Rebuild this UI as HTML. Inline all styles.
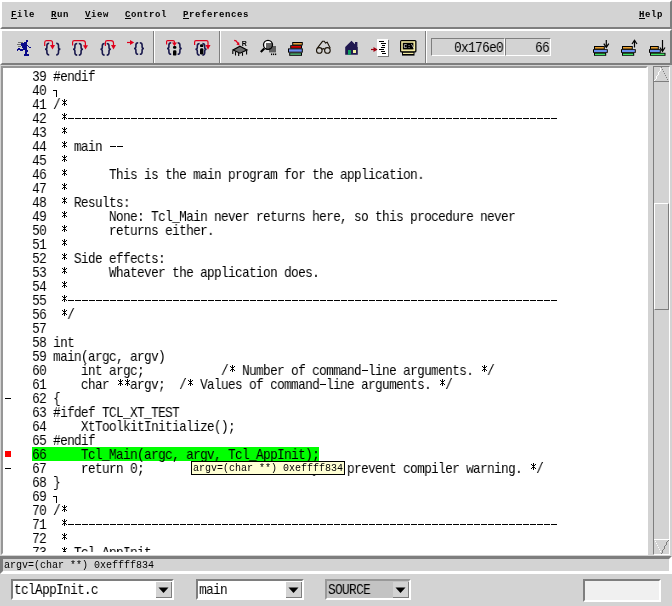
<!DOCTYPE html>
<html><head><meta charset="utf-8"><style>
html,body{margin:0;padding:0;}
body{width:672px;height:606px;position:relative;overflow:hidden;background:#d3d3d3;}
.a{position:absolute;box-sizing:content-box;}
.mnu{font-family:"Liberation Mono",monospace;font-size:10px;line-height:10px;font-weight:bold;white-space:pre;color:#000;will-change:transform;}
.mm{font-size:9px;letter-spacing:0.6px;}
.code{font-family:"Liberation Mono",monospace;font-size:15px;line-height:14px;white-space:pre;color:#000;transform:scaleX(0.85);letter-spacing:-0.7647px;transform-origin:0 0;will-change:transform;}
</style></head><body>
<div class="a" style="left:0px;top:0px;width:668px;height:25px;border:2px solid;border-color:#ffffff #7e7e7e #7e7e7e #ffffff;"></div><div class="a mnu mm" style="left:11px;top:10px">File</div><div class="a" style="left:11px;top:18px;width:6px;height:1px;background:#000"></div><div class="a mnu mm" style="left:51px;top:10px">Run</div><div class="a" style="left:51px;top:18px;width:6px;height:1px;background:#000"></div><div class="a mnu mm" style="left:85px;top:10px">View</div><div class="a" style="left:85px;top:18px;width:6px;height:1px;background:#000"></div><div class="a mnu mm" style="left:125px;top:10px">Control</div><div class="a" style="left:125px;top:18px;width:6px;height:1px;background:#000"></div><div class="a mnu mm" style="left:183px;top:10px">Preferences</div><div class="a" style="left:183px;top:18px;width:6px;height:1px;background:#000"></div><div class="a mnu mm" style="left:639px;top:10px">Help</div><div class="a" style="left:639px;top:18px;width:6px;height:1px;background:#000"></div><div class="a" style="left:0px;top:29px;width:668px;height:32px;border:2px solid;border-color:#ffffff #7e7e7e #7e7e7e #ffffff;"></div><div class="a" style="left:153px;top:31px;width:1px;height:32px;background:#7e7e7e"></div><div class="a" style="left:154px;top:31px;width:1px;height:32px;background:#ffffff"></div><div class="a" style="left:219px;top:31px;width:1px;height:32px;background:#7e7e7e"></div><div class="a" style="left:220px;top:31px;width:1px;height:32px;background:#ffffff"></div><div class="a" style="left:425px;top:31px;width:1px;height:32px;background:#7e7e7e"></div><div class="a" style="left:426px;top:31px;width:1px;height:32px;background:#ffffff"></div><div class="a" style="left:431px;top:38px;width:72px;height:16px;border:1px solid;border-color:#7e7e7e #ffffff #ffffff #7e7e7e;"></div><div class="a" style="left:505px;top:38px;width:44px;height:16px;border:1px solid;border-color:#7e7e7e #ffffff #ffffff #7e7e7e;"></div><div class="a code" style="left:454px;top:42px">0x176e0</div><div class="a code" style="left:535px;top:42px">66</div><div class="a" style="left:1px;top:66px;width:643px;height:485px;border:2px solid;border-color:#7e7e7e #ffffff #ffffff #7e7e7e;background:#fff;border-color:#969696 #fff #fff #969696;"></div><div class="a" style="left:3px;top:68px;width:645px;height:484px;overflow:hidden"><div class="a" style="left:-3px;top:-68px;width:672px;height:606px"><div class="a" style="left:32px;top:447px;width:287px;height:14px;background:#00ff00"></div><div class="a" style="left:5px;top:451px;width:6px;height:6px;background:#ff0000"></div><div class="a code" style="left:4px;top:71px">    39 #endif</div><div class="a" style="left:53px;top:90px;width:3px;height:6px;border-top:1px solid #000;border-right:1px solid #000"></div><div class="a code" style="left:4px;top:85px">    40 </div><div class="a code" style="left:4px;top:99px">    41 / </div><div class="a code" style="left:4px;top:113px">    42                                                                         </div><div class="a code" style="left:4px;top:127px">    43   </div><div class="a code" style="left:4px;top:141px">    44    main   </div><div class="a code" style="left:4px;top:155px">    45   </div><div class="a code" style="left:4px;top:169px">    46         This is the main program for the application.</div><div class="a code" style="left:4px;top:183px">    47   </div><div class="a code" style="left:4px;top:197px">    48    Results:</div><div class="a code" style="left:4px;top:211px">    49         None: Tcl_Main never returns here, so this procedure never</div><div class="a code" style="left:4px;top:225px">    50         returns either.</div><div class="a code" style="left:4px;top:239px">    51   </div><div class="a code" style="left:4px;top:253px">    52    Side effects:</div><div class="a code" style="left:4px;top:267px">    53         Whatever the application does.</div><div class="a code" style="left:4px;top:281px">    54   </div><div class="a code" style="left:4px;top:295px">    55                                                                         </div><div class="a code" style="left:4px;top:309px">    56   /</div><div class="a code" style="left:4px;top:323px">    57 </div><div class="a code" style="left:4px;top:337px">    58 int</div><div class="a code" style="left:4px;top:351px">    59 main(argc, argv)</div><div class="a code" style="left:4px;top:365px">    60     int argc;           /  Number of command line arguments.  /</div><div class="a code" style="left:4px;top:379px">    61     char   argv;  /  Values of command line arguments.  /</div><div class="a code" style="left:4px;top:393px">    62 {</div><div class="a code" style="left:4px;top:407px">    63 #ifdef TCL_XT_TEST</div><div class="a code" style="left:4px;top:421px">    64     XtToolkitInitialize();</div><div class="a code" style="left:4px;top:435px">    65 #endif</div><div class="a code" style="left:4px;top:449px">    66     Tcl_Main(argc, argv, Tcl_AppInit);</div><div class="a code" style="left:4px;top:463px">    67     return 0;           /  Needed only to prevent compiler warning.  /</div><div class="a code" style="left:4px;top:477px">    68 }</div><div class="a" style="left:53px;top:496px;width:3px;height:6px;border-top:1px solid #000;border-right:1px solid #000"></div><div class="a code" style="left:4px;top:491px">    69 </div><div class="a code" style="left:4px;top:505px">    70 / </div><div class="a code" style="left:4px;top:519px">    71                                                                         </div><div class="a code" style="left:4px;top:533px">    72   </div><div class="a code" style="left:4px;top:547px">    73    Tcl_AppInit   </div><svg class="a" style="left:0;top:0" width="672" height="606" shape-rendering="crispEdges"><defs><symbol id="ast" width="7" height="14"><rect x="4" y="2" width="1" height="7"/><rect x="3" y="4" width="3" height="1"/><rect x="3" y="6" width="3" height="1"/><rect x="2" y="3" width="1" height="1"/><rect x="6" y="3" width="1" height="1"/><rect x="2" y="7" width="1" height="1"/><rect x="6" y="7" width="1" height="1"/></symbol></defs><g fill="#000"><use href="#ast" x="60" y="97"/><use href="#ast" x="60" y="111"/><rect x="68" y="118" width="6" height="1"/><rect x="75" y="118" width="6" height="1"/><rect x="82" y="118" width="6" height="1"/><rect x="89" y="118" width="6" height="1"/><rect x="96" y="118" width="6" height="1"/><rect x="103" y="118" width="6" height="1"/><rect x="110" y="118" width="6" height="1"/><rect x="117" y="118" width="6" height="1"/><rect x="124" y="118" width="6" height="1"/><rect x="131" y="118" width="6" height="1"/><rect x="138" y="118" width="6" height="1"/><rect x="145" y="118" width="6" height="1"/><rect x="152" y="118" width="6" height="1"/><rect x="159" y="118" width="6" height="1"/><rect x="166" y="118" width="6" height="1"/><rect x="173" y="118" width="6" height="1"/><rect x="180" y="118" width="6" height="1"/><rect x="187" y="118" width="6" height="1"/><rect x="194" y="118" width="6" height="1"/><rect x="201" y="118" width="6" height="1"/><rect x="208" y="118" width="6" height="1"/><rect x="215" y="118" width="6" height="1"/><rect x="222" y="118" width="6" height="1"/><rect x="229" y="118" width="6" height="1"/><rect x="236" y="118" width="6" height="1"/><rect x="243" y="118" width="6" height="1"/><rect x="250" y="118" width="6" height="1"/><rect x="257" y="118" width="6" height="1"/><rect x="264" y="118" width="6" height="1"/><rect x="271" y="118" width="6" height="1"/><rect x="278" y="118" width="6" height="1"/><rect x="285" y="118" width="6" height="1"/><rect x="292" y="118" width="6" height="1"/><rect x="299" y="118" width="6" height="1"/><rect x="306" y="118" width="6" height="1"/><rect x="313" y="118" width="6" height="1"/><rect x="320" y="118" width="6" height="1"/><rect x="327" y="118" width="6" height="1"/><rect x="334" y="118" width="6" height="1"/><rect x="341" y="118" width="6" height="1"/><rect x="348" y="118" width="6" height="1"/><rect x="355" y="118" width="6" height="1"/><rect x="362" y="118" width="6" height="1"/><rect x="369" y="118" width="6" height="1"/><rect x="376" y="118" width="6" height="1"/><rect x="383" y="118" width="6" height="1"/><rect x="390" y="118" width="6" height="1"/><rect x="397" y="118" width="6" height="1"/><rect x="404" y="118" width="6" height="1"/><rect x="411" y="118" width="6" height="1"/><rect x="418" y="118" width="6" height="1"/><rect x="425" y="118" width="6" height="1"/><rect x="432" y="118" width="6" height="1"/><rect x="439" y="118" width="6" height="1"/><rect x="446" y="118" width="6" height="1"/><rect x="453" y="118" width="6" height="1"/><rect x="460" y="118" width="6" height="1"/><rect x="467" y="118" width="6" height="1"/><rect x="474" y="118" width="6" height="1"/><rect x="481" y="118" width="6" height="1"/><rect x="488" y="118" width="6" height="1"/><rect x="495" y="118" width="6" height="1"/><rect x="502" y="118" width="6" height="1"/><rect x="509" y="118" width="6" height="1"/><rect x="516" y="118" width="6" height="1"/><rect x="523" y="118" width="6" height="1"/><rect x="530" y="118" width="6" height="1"/><rect x="537" y="118" width="6" height="1"/><rect x="544" y="118" width="6" height="1"/><rect x="551" y="118" width="6" height="1"/><use href="#ast" x="60" y="125"/><use href="#ast" x="60" y="139"/><rect x="110" y="146" width="6" height="1"/><rect x="117" y="146" width="6" height="1"/><use href="#ast" x="60" y="153"/><use href="#ast" x="60" y="167"/><use href="#ast" x="60" y="181"/><use href="#ast" x="60" y="195"/><use href="#ast" x="60" y="209"/><use href="#ast" x="60" y="223"/><use href="#ast" x="60" y="237"/><use href="#ast" x="60" y="251"/><use href="#ast" x="60" y="265"/><use href="#ast" x="60" y="279"/><use href="#ast" x="60" y="293"/><rect x="68" y="300" width="6" height="1"/><rect x="75" y="300" width="6" height="1"/><rect x="82" y="300" width="6" height="1"/><rect x="89" y="300" width="6" height="1"/><rect x="96" y="300" width="6" height="1"/><rect x="103" y="300" width="6" height="1"/><rect x="110" y="300" width="6" height="1"/><rect x="117" y="300" width="6" height="1"/><rect x="124" y="300" width="6" height="1"/><rect x="131" y="300" width="6" height="1"/><rect x="138" y="300" width="6" height="1"/><rect x="145" y="300" width="6" height="1"/><rect x="152" y="300" width="6" height="1"/><rect x="159" y="300" width="6" height="1"/><rect x="166" y="300" width="6" height="1"/><rect x="173" y="300" width="6" height="1"/><rect x="180" y="300" width="6" height="1"/><rect x="187" y="300" width="6" height="1"/><rect x="194" y="300" width="6" height="1"/><rect x="201" y="300" width="6" height="1"/><rect x="208" y="300" width="6" height="1"/><rect x="215" y="300" width="6" height="1"/><rect x="222" y="300" width="6" height="1"/><rect x="229" y="300" width="6" height="1"/><rect x="236" y="300" width="6" height="1"/><rect x="243" y="300" width="6" height="1"/><rect x="250" y="300" width="6" height="1"/><rect x="257" y="300" width="6" height="1"/><rect x="264" y="300" width="6" height="1"/><rect x="271" y="300" width="6" height="1"/><rect x="278" y="300" width="6" height="1"/><rect x="285" y="300" width="6" height="1"/><rect x="292" y="300" width="6" height="1"/><rect x="299" y="300" width="6" height="1"/><rect x="306" y="300" width="6" height="1"/><rect x="313" y="300" width="6" height="1"/><rect x="320" y="300" width="6" height="1"/><rect x="327" y="300" width="6" height="1"/><rect x="334" y="300" width="6" height="1"/><rect x="341" y="300" width="6" height="1"/><rect x="348" y="300" width="6" height="1"/><rect x="355" y="300" width="6" height="1"/><rect x="362" y="300" width="6" height="1"/><rect x="369" y="300" width="6" height="1"/><rect x="376" y="300" width="6" height="1"/><rect x="383" y="300" width="6" height="1"/><rect x="390" y="300" width="6" height="1"/><rect x="397" y="300" width="6" height="1"/><rect x="404" y="300" width="6" height="1"/><rect x="411" y="300" width="6" height="1"/><rect x="418" y="300" width="6" height="1"/><rect x="425" y="300" width="6" height="1"/><rect x="432" y="300" width="6" height="1"/><rect x="439" y="300" width="6" height="1"/><rect x="446" y="300" width="6" height="1"/><rect x="453" y="300" width="6" height="1"/><rect x="460" y="300" width="6" height="1"/><rect x="467" y="300" width="6" height="1"/><rect x="474" y="300" width="6" height="1"/><rect x="481" y="300" width="6" height="1"/><rect x="488" y="300" width="6" height="1"/><rect x="495" y="300" width="6" height="1"/><rect x="502" y="300" width="6" height="1"/><rect x="509" y="300" width="6" height="1"/><rect x="516" y="300" width="6" height="1"/><rect x="523" y="300" width="6" height="1"/><rect x="530" y="300" width="6" height="1"/><rect x="537" y="300" width="6" height="1"/><rect x="544" y="300" width="6" height="1"/><rect x="551" y="300" width="6" height="1"/><use href="#ast" x="60" y="307"/><use href="#ast" x="228" y="363"/><rect x="362" y="370" width="6" height="1"/><use href="#ast" x="480" y="363"/><use href="#ast" x="116" y="377"/><use href="#ast" x="123" y="377"/><use href="#ast" x="186" y="377"/><rect x="320" y="384" width="6" height="1"/><use href="#ast" x="438" y="377"/><rect x="5" y="398" width="6" height="1"/><rect x="5" y="468" width="6" height="1"/><use href="#ast" x="228" y="461"/><use href="#ast" x="529" y="461"/><use href="#ast" x="60" y="503"/><use href="#ast" x="60" y="517"/><rect x="68" y="524" width="6" height="1"/><rect x="75" y="524" width="6" height="1"/><rect x="82" y="524" width="6" height="1"/><rect x="89" y="524" width="6" height="1"/><rect x="96" y="524" width="6" height="1"/><rect x="103" y="524" width="6" height="1"/><rect x="110" y="524" width="6" height="1"/><rect x="117" y="524" width="6" height="1"/><rect x="124" y="524" width="6" height="1"/><rect x="131" y="524" width="6" height="1"/><rect x="138" y="524" width="6" height="1"/><rect x="145" y="524" width="6" height="1"/><rect x="152" y="524" width="6" height="1"/><rect x="159" y="524" width="6" height="1"/><rect x="166" y="524" width="6" height="1"/><rect x="173" y="524" width="6" height="1"/><rect x="180" y="524" width="6" height="1"/><rect x="187" y="524" width="6" height="1"/><rect x="194" y="524" width="6" height="1"/><rect x="201" y="524" width="6" height="1"/><rect x="208" y="524" width="6" height="1"/><rect x="215" y="524" width="6" height="1"/><rect x="222" y="524" width="6" height="1"/><rect x="229" y="524" width="6" height="1"/><rect x="236" y="524" width="6" height="1"/><rect x="243" y="524" width="6" height="1"/><rect x="250" y="524" width="6" height="1"/><rect x="257" y="524" width="6" height="1"/><rect x="264" y="524" width="6" height="1"/><rect x="271" y="524" width="6" height="1"/><rect x="278" y="524" width="6" height="1"/><rect x="285" y="524" width="6" height="1"/><rect x="292" y="524" width="6" height="1"/><rect x="299" y="524" width="6" height="1"/><rect x="306" y="524" width="6" height="1"/><rect x="313" y="524" width="6" height="1"/><rect x="320" y="524" width="6" height="1"/><rect x="327" y="524" width="6" height="1"/><rect x="334" y="524" width="6" height="1"/><rect x="341" y="524" width="6" height="1"/><rect x="348" y="524" width="6" height="1"/><rect x="355" y="524" width="6" height="1"/><rect x="362" y="524" width="6" height="1"/><rect x="369" y="524" width="6" height="1"/><rect x="376" y="524" width="6" height="1"/><rect x="383" y="524" width="6" height="1"/><rect x="390" y="524" width="6" height="1"/><rect x="397" y="524" width="6" height="1"/><rect x="404" y="524" width="6" height="1"/><rect x="411" y="524" width="6" height="1"/><rect x="418" y="524" width="6" height="1"/><rect x="425" y="524" width="6" height="1"/><rect x="432" y="524" width="6" height="1"/><rect x="439" y="524" width="6" height="1"/><rect x="446" y="524" width="6" height="1"/><rect x="453" y="524" width="6" height="1"/><rect x="460" y="524" width="6" height="1"/><rect x="467" y="524" width="6" height="1"/><rect x="474" y="524" width="6" height="1"/><rect x="481" y="524" width="6" height="1"/><rect x="488" y="524" width="6" height="1"/><rect x="495" y="524" width="6" height="1"/><rect x="502" y="524" width="6" height="1"/><rect x="509" y="524" width="6" height="1"/><rect x="516" y="524" width="6" height="1"/><rect x="523" y="524" width="6" height="1"/><rect x="530" y="524" width="6" height="1"/><rect x="537" y="524" width="6" height="1"/><rect x="544" y="524" width="6" height="1"/><rect x="551" y="524" width="6" height="1"/><use href="#ast" x="60" y="531"/><use href="#ast" x="60" y="545"/><rect x="159" y="552" width="6" height="1"/><rect x="166" y="552" width="6" height="1"/></g></svg></div></div><div class="a" style="left:653px;top:66px;width:15px;height:487px;border:1px solid;border-color:#7e7e7e #ffffff #ffffff #7e7e7e;"></div><svg class="a" style="left:654px;top:67px" width="15" height="15" shape-rendering="crispEdges"><rect x="7" y="0" width="1" height="1" fill="#fff"/><rect x="7" y="0" width="1" height="1" fill="#7e7e7e"/><rect x="6" y="1" width="1" height="1" fill="#fff"/><rect x="6" y="2" width="1" height="1" fill="#fff"/><rect x="8" y="2" width="1" height="1" fill="#7e7e7e"/><rect x="6" y="3" width="1" height="1" fill="#fff"/><rect x="5" y="4" width="1" height="1" fill="#fff"/><rect x="9" y="4" width="1" height="1" fill="#7e7e7e"/><rect x="4" y="5" width="1" height="1" fill="#fff"/><rect x="4" y="6" width="1" height="1" fill="#fff"/><rect x="10" y="6" width="1" height="1" fill="#7e7e7e"/><rect x="4" y="7" width="1" height="1" fill="#fff"/><rect x="3" y="8" width="1" height="1" fill="#fff"/><rect x="11" y="8" width="1" height="1" fill="#7e7e7e"/><rect x="2" y="9" width="1" height="1" fill="#fff"/><rect x="2" y="10" width="1" height="1" fill="#fff"/><rect x="12" y="10" width="1" height="1" fill="#7e7e7e"/><rect x="2" y="11" width="1" height="1" fill="#fff"/><rect x="1" y="12" width="1" height="1" fill="#fff"/><rect x="13" y="12" width="1" height="1" fill="#7e7e7e"/><rect x="0" y="13" width="1" height="1" fill="#fff"/><rect x="0" y="14" width="1" height="1" fill="#fff"/><rect x="14" y="14" width="1" height="1" fill="#7e7e7e"/><rect x="0" y="14" width="15" height="1" fill="#7e7e7e"/></svg><svg class="a" style="left:654px;top:539px" width="15" height="15" shape-rendering="crispEdges"><rect x="0" y="0" width="1" height="1" fill="#fff"/><rect x="14" y="0" width="1" height="1" fill="#7e7e7e"/><rect x="14" y="1" width="1" height="1" fill="#7e7e7e"/><rect x="1" y="2" width="1" height="1" fill="#fff"/><rect x="13" y="2" width="1" height="1" fill="#7e7e7e"/><rect x="12" y="3" width="1" height="1" fill="#7e7e7e"/><rect x="2" y="4" width="1" height="1" fill="#fff"/><rect x="12" y="4" width="1" height="1" fill="#7e7e7e"/><rect x="12" y="5" width="1" height="1" fill="#7e7e7e"/><rect x="3" y="6" width="1" height="1" fill="#fff"/><rect x="11" y="6" width="1" height="1" fill="#7e7e7e"/><rect x="10" y="7" width="1" height="1" fill="#7e7e7e"/><rect x="4" y="8" width="1" height="1" fill="#fff"/><rect x="10" y="8" width="1" height="1" fill="#7e7e7e"/><rect x="10" y="9" width="1" height="1" fill="#7e7e7e"/><rect x="5" y="10" width="1" height="1" fill="#fff"/><rect x="9" y="10" width="1" height="1" fill="#7e7e7e"/><rect x="8" y="11" width="1" height="1" fill="#7e7e7e"/><rect x="6" y="12" width="1" height="1" fill="#fff"/><rect x="8" y="12" width="1" height="1" fill="#7e7e7e"/><rect x="8" y="13" width="1" height="1" fill="#7e7e7e"/><rect x="7" y="14" width="1" height="1" fill="#fff"/><rect x="7" y="14" width="1" height="1" fill="#7e7e7e"/><rect x="0" y="0" width="15" height="1" fill="#fff"/></svg><div class="a" style="left:654px;top:203px;width:13px;height:105px;border:1px solid;border-color:#ffffff #7e7e7e #7e7e7e #ffffff;"></div><div class="a" style="left:0px;top:556px;width:666px;height:12px;border:3px solid;border-color:#7e7e7e #ffffff #ffffff #7e7e7e;"></div><div class="a mnu" style="left:4px;top:561px;font-weight:normal">argv=(char **) 0xeffff834</div><div class="a" style="left:191px;top:461px;width:152px;height:12px;border:1px solid #000;background:#ffffd4"></div><div class="a mnu" style="left:193px;top:464px;font-weight:normal">argv=(char **) 0xeffff834</div><div class="a" style="left:11px;top:579px;width:159px;height:17px;border:2px solid;border-color:#7e7e7e #fff #fff #7e7e7e;background:#fff"></div><div class="a code" style="left:14px;top:584px">tclAppInit.c</div><div class="a" style="left:156px;top:582px;width:15px;height:15px;border:1px solid;border-color:#fff #7e7e7e #7e7e7e #fff;border-width:0 1px 1px 0;background:#d3d3d3"></div><svg class="a" style="left:158px;top:587px" width="11" height="7"><polygon points="0.5,0.5 10.5,0.5 5.5,6" fill="#000"/></svg><div class="a" style="left:196px;top:579px;width:104px;height:17px;border:2px solid;border-color:#7e7e7e #fff #fff #7e7e7e;background:#fff"></div><div class="a code" style="left:199px;top:584px">main</div><div class="a" style="left:286px;top:582px;width:15px;height:15px;border:1px solid;border-color:#fff #7e7e7e #7e7e7e #fff;border-width:0 1px 1px 0;background:#d3d3d3"></div><svg class="a" style="left:288px;top:587px" width="11" height="7"><polygon points="0.5,0.5 10.5,0.5 5.5,6" fill="#000"/></svg><div class="a" style="left:325px;top:579px;width:82px;height:17px;border:2px solid;border-color:#999 #fff #fff #999;background:#c3c3c3"></div><div class="a code" style="left:328px;top:584px">SOURCE</div><div class="a" style="left:393px;top:582px;width:15px;height:15px;border:1px solid;border-color:#fff #7e7e7e #7e7e7e #fff;border-width:0 1px 1px 0;background:#d3d3d3"></div><svg class="a" style="left:395px;top:587px" width="11" height="7"><polygon points="0.5,0.5 10.5,0.5 5.5,6" fill="#000"/></svg><div class="a" style="left:583px;top:579px;width:74px;height:19px;border:2px solid;border-color:#7e7e7e #ffffff #ffffff #7e7e7e;background:#f0f0f0;"></div><svg class="a" style="left:0;top:29px" width="672" height="36" viewBox="0 29 672 36">
<defs>
<path id="lb" d="M4.6,0.7 Q2.3,0.7 2.3,3 V4.8 Q2.3,6.5 0.4,6.5 Q2.3,6.5 2.3,8.2 V10 Q2.3,12.3 4.6,12.3" fill="none" stroke="#1a1a4e" stroke-width="1.6"/>
<path id="rb" d="M0.4,0.7 Q2.7,0.7 2.7,3 V4.8 Q2.7,6.5 4.6,6.5 Q2.7,6.5 2.7,8.2 V10 Q2.7,12.3 0.4,12.3" fill="none" stroke="#1a1a4e" stroke-width="1.6"/>
</defs>
<!-- runner -->
<g fill="#0a0a8a" shape-rendering="crispEdges"><rect x="26" y="40" width="2" height="2"/><rect x="24" y="42" width="3" height="1"/><rect x="21" y="43" width="6" height="3"/><rect x="27" y="45" width="1" height="1"/><rect x="22" y="46" width="5" height="1"/><rect x="28" y="46" width="1" height="1"/><rect x="22" y="47" width="5" height="1"/><rect x="29" y="47" width="2" height="1"/><rect x="23" y="48" width="4" height="1"/><rect x="18" y="48" width="2" height="1"/><rect x="17" y="49" width="10" height="1"/><rect x="17" y="50" width="1" height="1"/><rect x="20" y="50" width="3" height="1"/><rect x="25" y="50" width="3" height="1"/><rect x="25" y="51" width="3" height="1"/><rect x="25" y="52" width="2" height="2"/><rect x="24" y="54" width="5" height="2"/></g>
<g fill="#707070" shape-rendering="crispEdges"><rect x="18" y="42" width="5" height="1"/><rect x="17" y="44" width="4" height="1"/><rect x="18" y="46" width="3" height="1"/></g>
<!-- step -->
<use href="#lb" x="44.6" y="42.6"/><use href="#rb" x="55.8" y="42.6"/>
<path d="M44.7,46 V42.5 Q44.7,40.6 46.5,40.6 H50.5 Q52.5,40.6 52.5,42.5 V47" fill="none" stroke="#e0001c" stroke-width="1.2"/>
<path d="M50,45 H55 L52.5,49.6 Z" fill="#e0001c"/>
<!-- next -->
<use href="#lb" x="72.6" y="42.8"/><use href="#rb" x="78.4" y="42.8"/>
<path d="M72.6,45.5 V42.3 Q72.6,40.6 74.4,40.6 H83 Q85.4,40.6 85.4,43 V47" fill="none" stroke="#e0001c" stroke-width="1.2"/>
<path d="M83,45.2 H88 L85.5,49.6 Z" fill="#e0001c"/>
<!-- finish -->
<use href="#lb" x="100" y="42.8"/><use href="#rb" x="106.3" y="42.8"/>
<path d="M105.4,46 V42.4 Q105.4,40.6 107.2,40.6 H111 Q113.5,40.6 113.5,43 V47" fill="none" stroke="#e0001c" stroke-width="1.2"/>
<path d="M111,45.1 H116 L113.5,49.6 Z" fill="#e0001c"/>
<!-- continue -->
<use href="#lb" x="133.6" y="42"/><use href="#rb" x="139.4" y="42"/>
<path d="M127,42.5 H131" stroke="#e0001c" stroke-width="1.2"/>
<path d="M130,40 L134.2,42.5 L130,45 Z" fill="#e0001c"/>
<!-- stepi -->
<use href="#lb" x="166.6" y="42"/><use href="#rb" x="177.2" y="42"/>
<path d="M166.6,44.6 V41.5 Q166.6,40.6 167.6,40.6 H173 Q174.5,40.6 174.5,42 V44" fill="none" stroke="#e0001c" stroke-width="1.2"/>
<path d="M172,42.4 H177 L174.5,46.2 Z" fill="#e0001c"/>
<g fill="#000"><rect x="173" y="46" width="3.4" height="2.8" rx="1.2"/><rect x="173" y="50.2" width="3.4" height="5.4" rx="1.2"/></g>
<!-- nexti -->
<use href="#lb" x="195" y="42.8"/><use href="#rb" x="202" y="42.8"/>
<path d="M194.6,45 V42 Q194.6,40.6 196,40.6 H206.5 Q208,40.6 208,42 V47" fill="none" stroke="#e0001c" stroke-width="1.2"/>
<path d="M205.5,45 H210.5 L208,49.8 Z" fill="#e0001c"/>
<g fill="#000"><rect x="200" y="44.3" width="3.4" height="2.8" rx="1.2"/><rect x="200" y="48.2" width="3.4" height="6.4" rx="1.4"/></g>
<!-- registers -->
<path d="M234.2,40.3 L236,40.9 L238.2,43.6" fill="none" stroke="#e0001c" stroke-width="1.3"/>
<path d="M236.4,44.6 L239.6,45.6 L239,42 Z" fill="#e0001c"/>
<text x="241.8" y="46.2" font-family="Liberation Sans" font-size="7" font-weight="bold" fill="#000">R</text>
<path d="M240,46.3 L247,50 L240,53.2 L233,50 Z" fill="#6c6c6c" stroke="#000" stroke-width="1.2"/>
<g stroke="#000" stroke-width="1.1"><line x1="232.8" y1="50.5" x2="232.8" y2="54"/><line x1="235.5" y1="51.5" x2="235.5" y2="55.5"/><line x1="238.7" y1="53" x2="238.7" y2="56"/><line x1="242.5" y1="52.5" x2="242.5" y2="55.8"/><line x1="246.6" y1="50.5" x2="246.6" y2="54.5"/></g>
<!-- memory -->
<circle cx="268" cy="44.8" r="4.4" fill="#fff"/>
<rect x="266" y="43" width="6.6" height="6.6" fill="#666"/><rect x="269" y="46" width="7" height="6.4" fill="#5e5e5e"/>
<g fill="#000"><rect x="271" y="53.5" width="1.2" height="1.6"/><rect x="273" y="53.5" width="1.2" height="1.6"/><rect x="275" y="53.5" width="1.2" height="1.6"/></g>
<circle cx="268" cy="44.8" r="4.5" fill="none" stroke="#000" stroke-width="1.3"/>
<line x1="264.3" y1="48.5" x2="260.8" y2="52" stroke="#000" stroke-width="2.2"/>
<!-- stack -->
<rect x="292.2" y="42" width="10.6" height="3.4" fill="#000"/><rect x="293.2" y="43" width="8.6" height="1.6" fill="#e0a040"/>
<rect x="290.2" y="45.2" width="11.8" height="3.3" fill="#000"/><rect x="291.2" y="46.1" width="9.8" height="1.6" fill="#f00000"/>
<rect x="288" y="48.4" width="14.8" height="4.2" fill="#000"/><rect x="289" y="49.3" width="12.8" height="2.4" fill="#6d8ef0"/>
<rect x="289.2" y="52.6" width="12.8" height="3.2" fill="#000"/><rect x="290.2" y="53.3" width="10.8" height="1.6" fill="#50b070"/>
<!-- glasses -->
<g fill="none" stroke="#1a1206" stroke-width="1.1">
<circle cx="319.3" cy="50.4" r="2.8"/><circle cx="327.4" cy="50.4" r="2.8"/>
<path d="M322.1,49.5 Q323.4,47.8 324.6,49.5"/>
<path d="M317.5,47.8 L322.5,41.3 L324.3,41.3 L325.5,43 L327.2,42.2 L330.3,48.2"/>
</g>
<!-- house -->
<path d="M345.2,47 L351.5,40.8 L355,44.3 V42 H357.4 V47 H357.8 V54.8 H345.2 Z" fill="#201850"/>
<rect x="348" y="50" width="2.9" height="4.8" fill="#10a060"/>
<rect x="353" y="50" width="3" height="3" fill="#f0f0a0"/>
<!-- source page -->
<rect x="378" y="40" width="11" height="17" fill="#7a7a7a"/>
<rect x="377" y="39" width="11" height="17" fill="#fff"/>
<g stroke="#000" stroke-width="1"><line x1="379" y1="41.5" x2="384" y2="41.5"/><line x1="381" y1="43.5" x2="386" y2="43.5"/><line x1="382" y1="45.5" x2="385" y2="45.5"/><line x1="381" y1="47.5" x2="385" y2="47.5"/><line x1="379" y1="49.5" x2="384" y2="49.5"/><line x1="381" y1="51.5" x2="385" y2="51.5"/><line x1="382" y1="53.5" x2="386" y2="53.5"/></g>
<path d="M371,49.5 H377" stroke="#a00010" stroke-width="1.2"/><path d="M373.5,47 L377.5,49.5 L373.5,52 Z" fill="#a00010"/>
<!-- console -->
<rect x="400" y="40" width="16.5" height="12.5" rx="1.5" fill="#000"/>
<rect x="401.2" y="41.2" width="14" height="10" fill="#f0e8a0"/>
<rect x="402.8" y="42.8" width="10.6" height="6.6" fill="#000"/>
<text x="403.6" y="48.2" font-family="Liberation Mono" font-size="6" fill="#fff">C:\</text>
<rect x="402" y="52" width="12.5" height="3.6" fill="#000"/>
<rect x="403" y="52.8" width="10.5" height="1.2" fill="#f0e8a0"/>
<!-- stack down -->
<g id="stk">
<rect x="594" y="46" width="10.8" height="3.4" fill="#000"/><rect x="595" y="47" width="8.8" height="1.6" fill="#e8a030"/>
<rect x="593" y="49.2" width="14.8" height="3.6" fill="#000"/><rect x="594" y="50" width="12.8" height="2" fill="#6890f0"/>
<rect x="594" y="52.8" width="12.2" height="3" fill="#000"/><rect x="595" y="53.6" width="10.2" height="1.5" fill="#40e060"/>
</g>
<path d="M606.3,40 V47" stroke="#000" stroke-width="1.2"/><path d="M603.8,43.6 L606.3,47.4 L608.8,43.6" fill="none" stroke="#000" stroke-width="1.2"/>
<!-- stack up -->
<use href="#stk" x="28" y="0"/>
<path d="M634.5,40.5 V47.5" stroke="#000" stroke-width="1.2"/><path d="M632,44 L634.5,40.3 L637,44" fill="none" stroke="#000" stroke-width="1.2"/>
<!-- stack bottom -->
<rect x="650" y="46" width="8.8" height="3.4" fill="#000"/><rect x="651" y="47" width="6.8" height="1.6" fill="#e8a030"/>
<rect x="649" y="49.2" width="11.8" height="3.6" fill="#000"/><rect x="650" y="50" width="9.8" height="2" fill="#6890f0"/>
<rect x="650" y="52.8" width="15.5" height="3" fill="#000"/><rect x="651" y="53.6" width="13.5" height="1.5" fill="#40e060"/>
<path d="M662.5,40 V51" stroke="#000" stroke-width="1.2"/><path d="M660,47.5 L662.5,51.3 L665,47.5" fill="none" stroke="#000" stroke-width="1.2"/>
</svg>

</body></html>
